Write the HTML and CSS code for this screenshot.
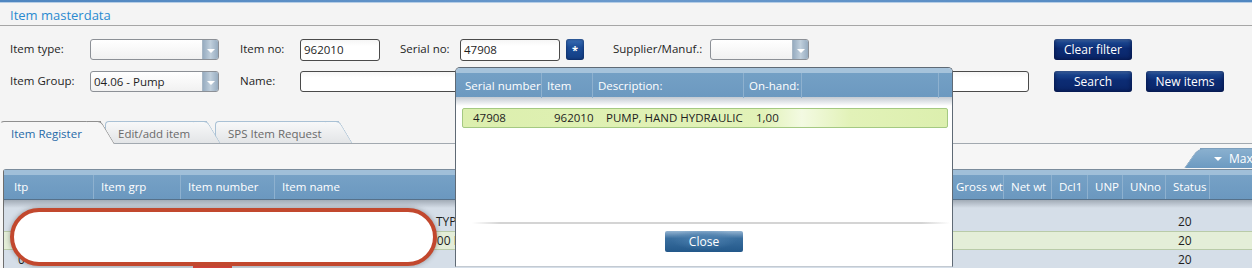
FILE: index.html
```html
<!DOCTYPE html>
<html>
<head>
<meta charset="utf-8">
<link rel="stylesheet" href="styles.css">
</head>
<body>
<div class="topbar"></div>
<div class="titlebar"><span class="title">Item masterdata</span></div>

<div class="filters">
  <div class="lbl c1 r1">Item type:</div>
  <div class="combo c2 r1"><span class="combo-val"></span><span class="combo-arrow"></span></div>
  <div class="lbl c4 r1">Item no:</div>
  <div class="input c5 r1">962010</div>
  <div class="lbl c7 r1">Serial no:</div>
  <div class="input c8 r1">47908</div>
  <div class="starbtn c10 r1">*</div>
  <div class="lbl c12 r1">Supplier/Manuf.:</div>
  <div class="combo c13 r1"><span class="combo-val"></span><span class="combo-arrow"></span></div>
  <div class="btn c15 r1">Clear filter</div>

  <div class="lbl c1 r2">Item Group:</div>
  <div class="combo c2 r2"><span class="combo-val">04.06 - Pump</span><span class="combo-arrow"></span></div>
  <div class="lbl c4 r2">Name:</div>
  <div class="input name-input r2"></div>
  <div class="btn c15 r2">Search</div>
  <div class="btn c17 r2">New items</div>
</div>

<div class="tabs">
  <div class="tab tab-active tab-reg">Item Register</div>
  <div class="tab tab-edit">Edit/add item</div>
  <div class="tab tab-sps">SPS Item Request</div>
</div>

<div class="content">
  <div class="maxbar"><div class="maxtab"><span class="max-arrow"></span>Max</div></div>
  <div class="grid">
    <div class="grid-band"></div>
    <div class="grid-head">
      <div class="hc hc-first">Itp</div>
      <div class="hc">Item grp</div>
      <div class="hc">Item number</div>
      <div class="hc">Item name</div>
      <div class="hc">Gross wt</div>
      <div class="hc">Net wt</div>
      <div class="hc">Dcl1</div>
      <div class="hc">UNP</div>
      <div class="hc">UNno</div>
      <div class="hc">Status</div>
      <div class="hc"></div>
    </div>
    <div class="grid-shade"></div>
    <div class="grow">
      <div class="gc"></div><div class="gc"></div><div class="gc"></div><div class="gc"></div>
      <div class="gc gc-type">TYPE</div><div class="gc"></div><div class="gc"></div><div class="gc"></div><div class="gc"></div><div class="gc"></div>
      <div class="gc gc-status">20</div><div class="gc"></div>
    </div>
    <div class="grow grow-alt">
      <div class="gc"></div><div class="gc"></div><div class="gc"></div><div class="gc"></div>
      <div class="gc gc-code">100 PUMP</div><div class="gc"></div><div class="gc"></div><div class="gc"></div><div class="gc"></div><div class="gc"></div>
      <div class="gc gc-status">20</div><div class="gc"></div>
    </div>
    <div class="grow">
      <div class="gc gc-first">01</div><div class="gc"></div><div class="gc"><span class="flag"></span></div><div class="gc"></div>
      <div class="gc"></div><div class="gc"></div><div class="gc"></div><div class="gc"></div><div class="gc"></div><div class="gc"></div>
      <div class="gc gc-status">20</div><div class="gc"></div>
    </div>
  </div>
</div>

<div class="redact"></div>

<div class="popup">
  <div class="pop-band"></div>
  <div class="pop-head">
    <div class="ph ph-first">Serial number</div>
    <div class="ph">Item</div>
    <div class="ph">Description:</div>
    <div class="ph">On-hand:</div>
    <div class="ph"></div>
    <div class="ph"></div>
  </div>
  <div class="pop-body">
    <div class="pop-row">
      <span class="pr pr-serial">47908</span>
      <span class="pr pr-item">962010</span>
      <span class="pr pr-desc">PUMP, HAND HYDRAULIC</span>
      <span class="pr">1,00</span>
    </div>
  </div>
  <div class="pop-sep"></div>
  <div class="closebtn">Close</div>
</div>
</body>
</html>
```

FILE: styles.css
```css
html, body { margin: 0; padding: 0; }
body {
  width: 1252px; height: 268px; overflow: hidden; position: relative;
  background: #f4f4f4;
  font-family: "Open Sans", "Noto Sans", sans-serif;
  font-size: 11.5px; color: #1e1e1e;
}
.topbar { height: 2px; background: linear-gradient(90deg, #4f86c0, #6a99cc 50%, #4f86c0); border-bottom: 1px solid #b5cde6; }
.titlebar { height: 23px; box-sizing: border-box; border-bottom: 1px solid #a6a6a6; padding: 4px 0 0 10px; }
.title { color: #2a8ad0; font-size: 13px; line-height: 16px; display: block; }

.filters {
  margin-top: 13px; padding-left: 10px;
  display: grid;
  grid-template-columns: 80px 130px 20px 60px 80px 20px 60px 100px 6px 18px 29px 97px 100px 244px 78px 14px 78px;
  grid-template-rows: 22px 22px; row-gap: 10px;
}
.r1 { grid-row: 1; } .r2 { grid-row: 2; }
.c1 { grid-column: 1; } .c2 { grid-column: 2; } .c4 { grid-column: 4; } .c5 { grid-column: 5; }
.c7 { grid-column: 7; } .c8 { grid-column: 8; } .c10 { grid-column: 10; } .c12 { grid-column: 12; }
.c13 { grid-column: 13; } .c15 { grid-column: 15; } .c17 { grid-column: 17; }
.lbl { align-self: center; line-height: 16px; padding-bottom: 2px; }
.combo {
  box-sizing: border-box; width: 129px; height: 21px; display: flex;
  border: 1px solid #8c9096; border-radius: 3px;
  background: linear-gradient(#ffffff, #f1f1f1);
}
.c13.combo { width: 99px; }
.combo-val { flex: 1; padding-left: 3px; line-height: 19px; }
.combo-arrow {
  width: 15px; position: relative; border-left: 1px solid #a7b6c4;
  background: linear-gradient(90deg, #97acc0, #c0cfdc 50%, #97acc0);
  border-radius: 0 2px 2px 0;
}
.combo-arrow::after {
  content: ""; position: absolute; left: 4px; top: 9px;
  border-left: 4px solid transparent; border-right: 4px solid transparent; border-top: 4px solid #ffffff;
}
.input {
  box-sizing: border-box; height: 22px; border: 1px solid #4a4a4a; border-radius: 3px;
  background: linear-gradient(#f6f6f6, #ffffff 30%);
  padding-left: 3px; line-height: 20px;
}
.name-input { grid-column: 5 / 15; width: 729px; height: 21px; }
.starbtn {
  height: 21px; border-radius: 3px; color: #fff; text-align: center; line-height: 22px; font-size: 11px; font-weight: bold;
  background: linear-gradient(#3b6fb6, #1b4c97 40%, #123d82);
  box-shadow: inset 0 0 3px rgba(0, 10, 40, 0.6);
}
.btn {
  height: 21px; border-radius: 3px; color: #fff; display: flex; align-items: center; justify-content: center;
  font-size: 12px;
  background: linear-gradient(#4a78bb 0%, #1a4590 18%, #0c2c74 45%, #0a2669 100%);
  box-shadow: inset 0 0 5px rgba(0, 5, 40, 0.7);
}

.tabs {
  margin-top: 26px; height: 25px; box-sizing: border-box;
  display: flex; align-items: flex-end;
  border-bottom: 1px solid #a2a9b0;
}
.tab {
  position: relative; box-sizing: border-box; height: 22px; line-height: 20px; padding-top: 2px;
  border-top: 1px solid #a9c1d5; border-left: 1px solid #a9c1d5;
  border-top-left-radius: 4px;
  background: linear-gradient(#f7f8f9, #e3e5e7);
  color: #6a6a6a;
}
.tab::after {
  content: ""; position: absolute; top: -1px; bottom: 0; right: -7px; width: 14px;
  background: inherit; border-top: 1px solid #a9c1d5; border-right: 1px solid #a9c1d5;
  transform: skewX(31deg); border-top-right-radius: 4px; z-index: -1;
}
.tab-active {
  z-index: 3; height: 23px; margin-bottom: -1px; background: #f6f6f6; color: #1f6aa8;
  border-color: #8f8f8f; border-left-color: transparent;
}
.tab-active::after { border-color: #8f8f8f; z-index: 0; background: #f6f6f6; }
.tab-reg { width: 101px; padding-left: 10px; }
.tab-edit { width: 102px; padding-left: 12px; margin-left: 4px; z-index: 2; }
.tab-sps { width: 124px; padding-left: 12px; margin-left: 8px; z-index: 1; }

.content { background: #f6f6f6; height: 124px; }
.maxbar { height: 25px; display: flex; justify-content: flex-end; align-items: flex-end; }
.maxtab {
  position: relative; z-index: 0; width: 52px; height: 20px; margin-bottom: 1px; color: #fff; line-height: 20px;
  background: linear-gradient(#8ab0cf, #6c9ac1);
  display: flex; align-items: center; gap: 7px; font-size: 12px;
  border-top: 1px solid #7d9fbd; box-sizing: border-box;
}
.maxtab::before {
  content: ""; position: absolute; left: -9px; top: -1px; bottom: 0; width: 22px;
  background: linear-gradient(#8ab0cf, #6c9ac1); transform: skewX(-35deg); border-top-left-radius: 7px; z-index: -1;
  border-top: 1px solid #7d9fbd; border-left: 1px solid #7d9fbd;
}
.max-arrow {
  margin-left: 14px;
  border-left: 4px solid transparent; border-right: 4px solid transparent; border-top: 4px solid #fff;
}

.grid {
  margin-left: 3px; border-left: 1px solid #6d6d6d; border-top: 1px solid #7b8c9c; border-top-left-radius: 3px;
  background: #d5dee8;
}
.grid-band { height: 5px; background: #a0bfd9; }
.grid-head {
  height: 24px; display: grid; color: #fff;
  grid-template-columns: 89px 87px 94px 674px 55px 48px 36px 35px 43px 44px 1fr;
  background: linear-gradient(#76a1c6, #6b98bf);
  border-bottom: 1px solid #56718a;
}
.hc { line-height: 24px; padding-left: 7px; border-left: 1px solid #8eb1cf; white-space: nowrap; overflow: hidden; }
.hc-first { border-left: none; padding-left: 10px; }
.grid-shade { height: 12px; background: linear-gradient(#a1abb6, #d5dee8 8px); }
.grow {
  height: 19px; display: grid; box-sizing: border-box;
  grid-template-columns: 89px 87px 94px 156px 518px 55px 48px 36px 35px 43px 44px 1fr;
}
.grow-alt { background: #e4eed8; border-top: 1px solid #b9cba8; border-bottom: 1px solid #b9cba8; }
.gc { line-height: 19px; white-space: nowrap; overflow: hidden; padding-left: 0; font-size: 12px; }
.grow-alt .gc { line-height: 17px; }
.gc-first { padding-left: 14px; }
.gc-type { padding-left: 6px; }
.gc-status { padding-left: 13px; }
.flag { display: block; margin: 16px 0 0 13px; width: 39px; height: 3px; background: #e5463a; }

.redact {
  position: absolute; left: 10px; top: 208px; width: 427px; height: 58px; box-sizing: border-box;
  border: 4px solid #c2482e; border-radius: 29px; background: #fff;
  box-shadow: 0 0 5px rgba(60, 60, 60, 0.45);
}

.popup {
  position: absolute; left: 455px; top: 67px; width: 498px; height: 200px; box-sizing: border-box;
  border: 1px solid #5f6a75; border-bottom-color: #c3cad2; border-radius: 5px 5px 0 0;
  background: #fff; overflow: hidden;
}
.pop-band { height: 5px; background: #a6c3db; }
.pop-head {
  height: 24px; display: grid; color: #fff;
  grid-template-columns: 85px 51px 151px 58px 137px 1fr;
  background: linear-gradient(#74a0c5, #6c99c0);
}
.ph { line-height: 25px; padding-left: 5px; border-left: 1px solid #8eb1cf; white-space: nowrap; }
.ph-first { border-left: none; padding-left: 9px; }
.pop-body { padding: 11px 4px 0 6px; background: linear-gradient(#c3cad2, #ffffff 9px); }
.pop-row {
  height: 20px; box-sizing: border-box; border: 1px solid #a4c982; border-radius: 2px;
  background: linear-gradient(90deg, #dcefae 0%, #e2f2b8 62%, #f3fae2 70%, #e2f2b8 80%, #dcefae 100%);
  display: flex; align-items: center; line-height: 18px;
}
.pr { white-space: nowrap; }
.pr-serial { width: 81px; padding-left: 10px; }
.pr-item { width: 52px; }
.pr-desc { width: 150px; }
.pop-sep {
  margin: 94px 2px 0 16px; height: 2px;
  background: linear-gradient(90deg, rgba(210,210,210,0), #d4d4d4 6%, #d4d4d4 94%, rgba(210,210,210,0));
}
.closebtn {
  width: 78px; height: 21px; margin: 7px auto 0; border-radius: 2px; color: #fff; font-size: 12px;
  display: flex; align-items: center; justify-content: center;
  background: radial-gradient(ellipse at 50% 40%, #4c7fae 0%, rgba(60,110,160,0) 60%), linear-gradient(#94b4d2 0%, #3a6f9f 35%, #23588a 100%);
}
```
